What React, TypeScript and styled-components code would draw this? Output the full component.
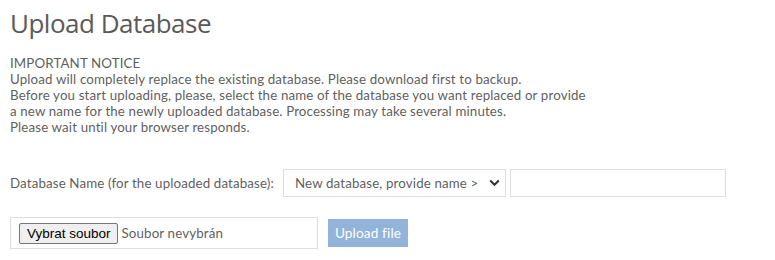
import React, { useState } from 'react'
import styled, { createGlobalStyle } from 'styled-components'

const GlobalStyle = createGlobalStyle`
  body {
    margin: 0;
    background: #ffffff;
    font-family: Lato, 'Open Sans', sans-serif;
    letter-spacing: 0.14px;
    color: #5f5f5f;
  }
`

const Page = styled.div`
  padding: 0 10px;
`

const Title = styled.h1`
  margin: 0;
  padding-top: 6px;
  font-family: 'Open Sans', 'Noto Sans', sans-serif;
  font-size: 26px;
  line-height: 34px;
  font-weight: 500;
  letter-spacing: -0.5px;
  color: #5a5a5a;
`

const Notice = styled.div`
  margin-top: 15px;
  font-size: 13.3px;
`

const NoticeLine = styled.div`
  height: 16px;
  line-height: 16px;
  white-space: nowrap;
`

const Form = styled.form`
  margin-top: 34px;
  display: flex;
  flex-direction: column;
  gap: 20px;
`

const Row = styled.div`
  display: flex;
  align-items: center;
  gap: 4px;
`

const Label = styled.label`
  font-size: 13.3px;
  margin-right: 5px;
`

const SelectWrap = styled.div`
  position: relative;
  width: 223px;
  height: 28px;
`

const Select = styled.select`
  appearance: none;
  width: 100%;
  height: 100%;
  border: 1px solid #dddddd;
  background: #ffffff;
  padding: 0 0 0 11px;
  font: inherit;
  font-size: 13.3px;
  letter-spacing: inherit;
  color: #5f5f5f;
  outline: none;
`

const Chevron = styled.svg`
  position: absolute;
  right: 6px;
  top: 10px;
  pointer-events: none;
`

const TextInput = styled.input`
  width: 216px;
  height: 28px;
  box-sizing: border-box;
  border: 1px solid #dddddd;
  padding: 0 6px;
  font: inherit;
  font-size: 13.3px;
  outline: none;
`

const FileBox = styled.label`
  box-sizing: border-box;
  width: 308px;
  height: 32px;
  border: 1px solid #dddddd;
  display: flex;
  align-items: center;
  padding: 0 8px;
  gap: 4px;
  cursor: pointer;

  input {
    display: none;
  }
`

const FakeButton = styled.span`
  box-sizing: border-box;
  height: 21px;
  padding: 0 6px 0 7px;
  display: flex;
  align-items: center;
  border: 1px solid #767676;
  border-radius: 2px;
  background: #efefef;
  color: #000000;
  font-family: 'Liberation Sans', Arial, sans-serif;
  font-size: 13.5px;
  letter-spacing: 0;
`

const FileName = styled.span`
  font-size: 13.3px;
`

const UploadButton = styled.button`
  margin-left: 6px;
  width: 80px;
  height: 28px;
  border: none;
  background: #92b3da;
  color: #ffffff;
  font: inherit;
  font-size: 13.6px;
  letter-spacing: inherit;
`

const noticeLines = [
  'IMPORTANT NOTICE',
  'Upload will completely replace the existing database. Please download first to backup.',
  'Before you start uploading, please, select the name of the database you want replaced or provide',
  'a new name for the newly uploaded database. Processing may take several minutes.',
  'Please wait until your browser responds.',
]

export default function App() {
  const [fileName, setFileName] = useState('')

  return (
    <Page>
      <GlobalStyle />
      <Title>Upload Database</Title>
      <Notice>
        {noticeLines.map((line) => (
          <NoticeLine key={line}>{line}</NoticeLine>
        ))}
      </Notice>
      <Form onSubmit={(e) => e.preventDefault()}>
        <Row>
          <Label htmlFor="dbname">Database Name (for the uploaded database):</Label>
          <SelectWrap>
            <Select id="dbname" defaultValue="new">
              <option value="new">New database, provide name &gt;</option>
            </Select>
            <Chevron width="11" height="8" viewBox="0 0 11 8">
              <path d="M1.2 1.5 L5.5 5.8 L9.8 1.5" fill="none" stroke="#333" strokeWidth="2" />
            </Chevron>
          </SelectWrap>
          <TextInput type="text" />
        </Row>
        <Row>
          <FileBox>
            <input type="file" onChange={(e) => setFileName(e.target.files?.[0]?.name ?? '')} />
            <FakeButton>Vybrat soubor</FakeButton>
            <FileName>{fileName || 'Soubor nevybrán'}</FileName>
          </FileBox>
          <UploadButton type="submit" disabled={!fileName}>
            Upload file
          </UploadButton>
        </Row>
      </Form>
    </Page>
  )
}
